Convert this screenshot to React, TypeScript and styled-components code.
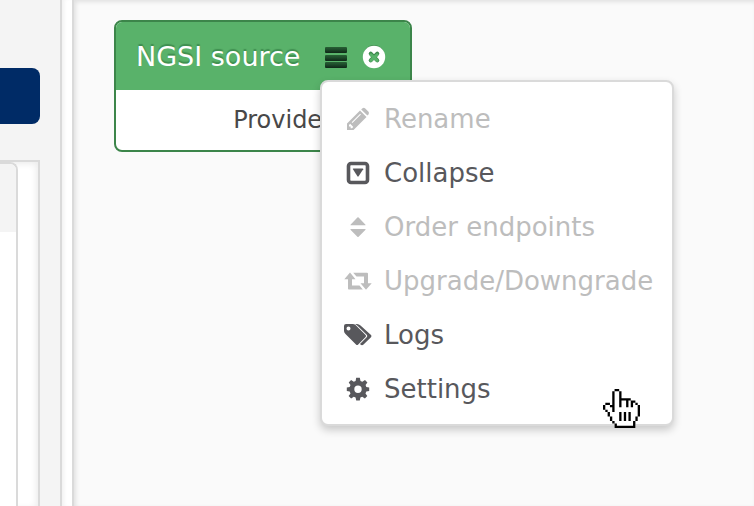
import React from "react";
import styled, { createGlobalStyle } from "styled-components";

const Global = createGlobalStyle`
  * { box-sizing: border-box; }
  html, body, #root { height: 100%; }
  body {
    margin: 0;
    overflow: hidden;
    font-family: Verdana, "DejaVu Sans", sans-serif;
    color: #484848;
    background: #fff;
  }
`;

const Page = styled.div`
  display: flex;
  height: 100%;
`;

const Sidebar = styled.aside`
  display: flex;
  flex-direction: column;
  gap: 36px;
  flex: none;
  width: 62px;
  padding: 68px 20px 0 0;
  background: #f4f4f4;
  border-right: 2px solid #dadada;
`;

const PrimaryButton = styled.button`
  height: 56px;
  flex: none;
  width: 100%;
  border: 0;
  border-radius: 0 8px 8px 0;
  background: #002b66;
`;

const ListFrame = styled.section`
  flex: 1;
  background: #fff;
  border: solid #dadada;
  border-width: 2px 2px 0 0;
  box-shadow: inset -2px 2px 6px rgba(0, 0, 0, 0.08);
`;

const ListCard = styled.div`
  height: 100%;
  width: 18px;
  background: #fff;
  border: solid #dadada;
  border-width: 2px 2px 0 0;
  border-radius: 0 8px 0 0;
  overflow: hidden;
`;

const ListCardHead = styled.div`
  height: 68px;
  background: #f4f4f4;
`;

const Gutter = styled.div`
  flex: none;
  width: 10px;
  background: #fff;
  box-shadow: inset 4px 0 4px -2px rgba(0, 0, 0, 0.06);
`;

const Canvas = styled.main`
  position: relative;
  flex: 1;
  background: #fafafa;
  border-left: 2px solid #dadada;
  box-shadow: inset 2px 2px 4px rgba(0, 0, 0, 0.1);
`;

const Node = styled.article`
  position: absolute;
  left: 40px;
  top: 20px;
  width: 298px;
  background: #fff;
  border: 2px solid #3c854a;
  border-radius: 8px;
  overflow: hidden;
`;

const NodeHead = styled.header`
  display: flex;
  align-items: center;
  height: 68px;
  padding: 2px 24px 0 20px;
  background: #59b26a;
  color: #fff;
`;

const NodeTitle = styled.h1`
  flex: 1;
  margin: 0;
  font-size: 27px;
  line-height: 32px;
  font-weight: 400;
  white-space: nowrap;
  text-shadow: 0 -2px 1px rgba(0, 60, 20, 0.3);
`;

const NodeAction = styled.button`
  display: flex;
  padding: 0;
  margin-left: 14px;
  border: 0;
  background: none;
  color: #fff;
`;

const Endpoint = styled.div`
  height: 60px;
  padding-right: 78px;
  text-align: right;
  font-size: 24px;
  line-height: 60px;
`;

const Menu = styled.ul`
  position: absolute;
  left: 246px;
  top: 80px;
  width: 354px;
  margin: 0;
  padding: 10px 0 8px;
  list-style: none;
  background: #fff;
  border: 2px solid #dadada;
  border-radius: 8px;
  box-shadow: 0 4px 8px rgba(0, 0, 0, 0.2);
`;

const MenuItem = styled.button`
  display: flex;
  align-items: center;
  gap: 11px;
  width: 100%;
  height: 54px;
  padding: 0 0 0 21px;
  border: 0;
  background: none;
  font-family: inherit;
  font-size: 26px;
  line-height: 32px;
  text-align: left;
  white-space: nowrap;
  color: #58585c;
  &:disabled { color: #bdbdbd; }
`;

const Cursor = styled.svg`
  position: absolute;
  left: 529px;
  top: 389px;
  pointer-events: none;
`;

const Glyph = ({ children }: { children: React.ReactNode }) => (
  <svg width="30" height="28" viewBox="0 0 30 28" fill="currentColor" aria-hidden="true">
    {children}
  </svg>
);

const icons = {
  pencil: (
    <Glyph>
      <path fillRule="evenodd" d="M4 18.500L17 5.500L23.500 12L10.500 25H4ZM6 20V21.500H7.600V23.200H9L10.300 21.900L7.200 18.800ZM8.700 17.300L9.400 18L17.900 9.500L17.200 8.800Z" />
      <path d="M18.200 4.400L19.500 3.200Q20.800 2.200 22 3.200L25.500 6.700Q26.500 7.900 25.500 9.200L24.400 10.600Z" />
    </Glyph>
  ),
  collapse: (
    <Glyph>
      <rect x="5.500" y="4.500" width="19" height="19" rx="2.500" fill="none" stroke="currentColor" strokeWidth="3.600" />
      <path d="M9.800 10Q9.700 9.500 10.400 9.500H19.600Q20.300 9.500 20.200 10.200L15.600 17.300Q15 18 14.400 17.300Z" />
    </Glyph>
  ),
  sort: (
    <Glyph>
      <path d="M7.500 12.200Q7.300 11.900 7.700 11.400L14.400 4.600Q15 4 15.600 4.600L22.300 11.400Q22.700 11.900 22.500 12.200ZM7.500 16H22.500Q22.700 16.500 22.300 17L15.600 23.700Q15 24.200 14.400 23.700L7.700 17Q7.300 16.500 7.500 16Z" />
    </Glyph>
  ),
  retweet: (
    <Glyph>
      <path d="M1.300 12.200L7 5.500L12.500 12.200H9V18.600H16.500L19.800 22.400H5.800Q5 22.400 5 21.500V12.200ZM28.700 16.200L23 22.800L17.500 16.200H21V9.500H13.500L10.200 5.800H24Q25 5.800 25 6.700V16.200Z" />
    </Glyph>
  ),
  tags: (
    <Glyph>
      <path fillRule="evenodd" d="M1 5Q1 3 3 3H9.500Q11.500 3 12.500 4L22.600 14Q23.500 15 22.600 16L15.200 23.500Q14 24.500 13 23.500L2.500 13Q1 11.500 1 10ZM5.500 5.500A2 2 0 1 0 5.500 9.500A2 2 0 1 0 5.500 5.500Z" />
      <path d="M12 3H14Q16 3 17.500 4.500L28 14.100Q29 15.100 28 16.200L20.500 23.500Q19 24.900 17.500 23.500L17 22.900L23.700 16.300Q25 15 23.700 13.700L15 5.200Q13.700 3.700 12 3Z" />
    </Glyph>
  ),
  cog: (
    <Glyph>
      <path fillRule="evenodd" d="M13.200 2.700H16.800L17.500 6L19.300 6.800L22 4.900L24.400 7.500L22.600 10.100L23.300 12L26.200 12.500V16L23.300 16.600L22.500 18.500L24.300 21.100L21.900 23.600L19.200 21.800L17.400 22.500L16.800 25.500H13.200L12.600 22.500L10.800 21.800L8.100 23.600L5.600 21.100L7.500 18.400L6.700 16.600L3.800 16V12.500L6.700 12L7.500 10.100L5.700 7.500L8.100 5L10.800 6.800L12.600 6ZM15 10.500A3.700 3.700 0 1 0 15 17.900A3.700 3.700 0 1 0 15 10.500Z" />
    </Glyph>
  ),
};

const items: { icon: keyof typeof icons; label: string; disabled?: boolean }[] = [
  { icon: "pencil", label: "Rename", disabled: true },
  { icon: "collapse", label: "Collapse" },
  { icon: "sort", label: "Order endpoints", disabled: true },
  { icon: "retweet", label: "Upgrade/Downgrade", disabled: true },
  { icon: "tags", label: "Logs" },
  { icon: "cog", label: "Settings" },
];

/* Pointer bitmap: # black, o white, space transparent. */
const hand = [
  "     ##         ",
  "    #oo#        ",
  "    #oo#        ",
  "    #oo#        ",
  "    #oo#####    ",
  "    #oo#oo#o##  ",
  " ## #oo#oo#o#o# ",
  "#oo##oo#oo#o#oo#",
  "#ooo#oooooooooo#",
  " #oo#oooooooooo#",
  "  #oooo#o#o#ooo#",
  "  #oooo#o#o#ooo#",
  "   #ooo#o#o#oo# ",
  "   #ooo#o#o#oo# ",
  "    #oooooooo#  ",
  "     #ooooooo#  ",
  "     #########  ",
];

const cells = (match: (c: string) => boolean) =>
  hand
    .flatMap((row, y) => [...row].map((c, x) => (match(c) ? `M${x} ${y}h1v1h-1z` : "")))
    .join("");

const HandCursor = () => (
  <Cursor width="37" height="39" viewBox="0 0 16 17" preserveAspectRatio="none" aria-hidden="true">
    <path d={cells((c) => c !== " ")} fill="#fff" />
    <path d={cells((c) => c === "#")} fill="#000" />
  </Cursor>
);

export default function App() {
  return (
    <Page>
      <Global />
      <Sidebar>
        <PrimaryButton aria-label="Create" />
        <ListFrame>
          <ListCard>
            <ListCardHead />
          </ListCard>
        </ListFrame>
      </Sidebar>
      <Gutter />
      <Canvas>
        <Node>
          <NodeHead>
            <NodeTitle>NGSI source</NodeTitle>
            <NodeAction aria-label="Menu">
              <svg width="24" height="24" viewBox="0 0 24 24" aria-hidden="true">
                <defs>
                  <linearGradient id="bar" x1="0" y1="0" x2="0" y2="1">
                    <stop offset="0" stopColor="#286034" />
                    <stop offset="0.4" stopColor="#1e4c2b" />
                    <stop offset="1" stopColor="#0f2617" />
                  </linearGradient>
                </defs>
                {[2, 10, 17].map((y) => (
                  <rect key={y} x="1" y={y} width="22" height="6" rx="1" fill="url(#bar)" />
                ))}
              </svg>
            </NodeAction>
            <NodeAction aria-label="Remove">
              <svg width="24" height="24" viewBox="0 0 24 24" aria-hidden="true">
                <circle cx="12" cy="10.500" r="10.500" fill="#3c854a" />
                <circle cx="12" cy="12" r="11.200" fill="#fff" />
                <path d="M8.700 8.700L15.300 15.300M15.300 8.700L8.700 15.300" stroke="#3f8a4e" strokeWidth="4" strokeLinecap="round" />
                <path d="M9 9.800L15 15.300M15 9.800L9 15.300" stroke="#59b26a" strokeWidth="3" strokeLinecap="round" />
              </svg>
            </NodeAction>
          </NodeHead>
          <Endpoint>Provider</Endpoint>
        </Node>
        <Menu>
          {items.map((it) => (
            <li key={it.label}>
              <MenuItem disabled={it.disabled}>
                {icons[it.icon]}
                {it.label}
              </MenuItem>
            </li>
          ))}
        </Menu>
        <HandCursor />
      </Canvas>
    </Page>
  );
}
